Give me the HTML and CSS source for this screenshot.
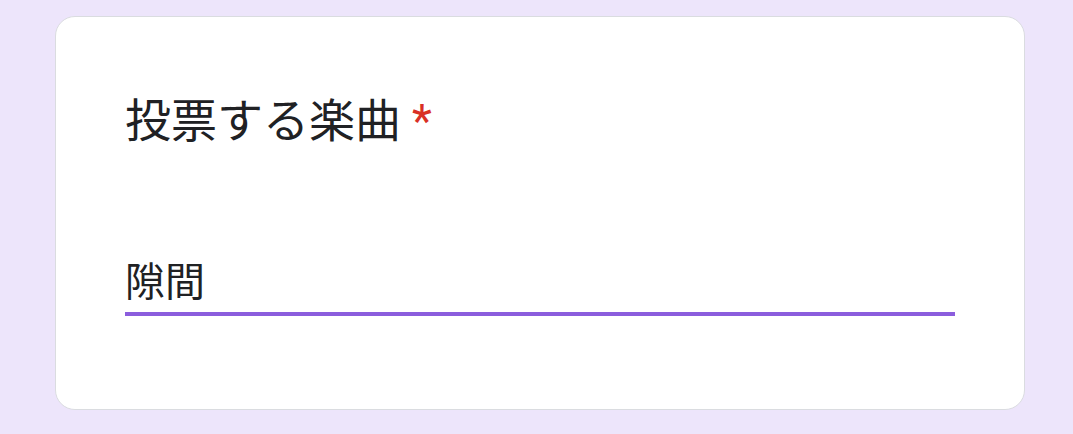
FILE: index.html
```html
<!DOCTYPE html>
<html lang="ja">
<head>
   <meta charset="UTF-8">
   <link rel="stylesheet" href="styles.css">
</head>
<body>
<div class="card">
   <div class="question-title">
      投票する楽曲<span class="required">*</span>
   </div>
   <div class="answer">
      <input class="answer-input" type="text" value="隙間">
   </div>
</div>
</body>
</html>
```

FILE: styles.css
```css
html, body {
   margin: 0;
   padding: 0;
}

body {
   background-color: #ede5fb;
   font-family: Roboto, "Noto Sans CJK JP", sans-serif;
   color: #202124;
   padding: 16px 0 0 55px;
}

.card {
   box-sizing: border-box;
   width: 970px;
   height: 394px;
   background-color: #fff;
   border: 1px solid #dadce0;
   border-radius: 20px;
   padding: 74px 69px 0 69px;
}

.question-title {
   font-size: 46px;
   line-height: 60px;
   letter-spacing: 0;
}

.required {
   color: #d93025;
   font-size: 46px;
   margin-left: 11px;
}

.answer {
   margin-top: 109px;
   width: 830px;
}

.answer-input {
   display: block;
   width: 100%;
   box-sizing: border-box;
   border: none;
   border-bottom: 4px solid #8b5ddd;
   outline: none;
   padding: 0 0 6px 0;
   margin: 0;
   font-family: Roboto, "Noto Sans CJK JP", sans-serif;
   font-size: 40px;
   line-height: 46px;
   color: #202124;
   background: transparent;
}
```
